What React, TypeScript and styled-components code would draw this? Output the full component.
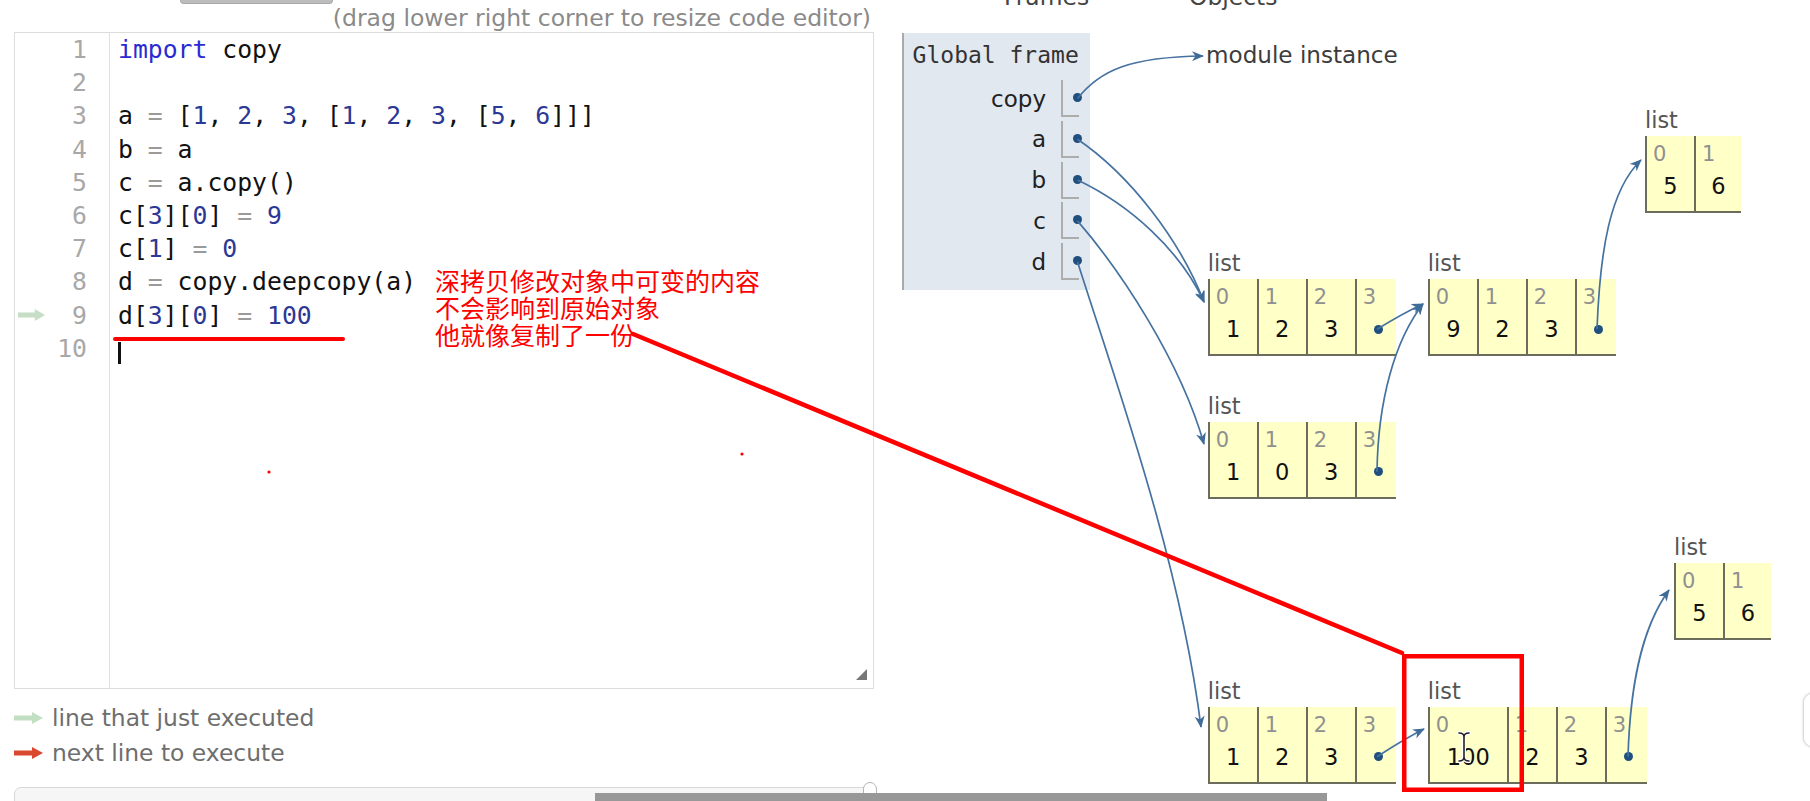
import React from 'react';
import styled, { createGlobalStyle } from 'styled-components';

const SANS = '"DejaVu Sans", Verdana, sans-serif';
const MONO = '"DejaVu Sans Mono", monospace';
const CJK = '"Noto Sans CJK SC", "DejaVu Sans", sans-serif';

const GlobalStyle = createGlobalStyle`
  html, body { margin: 0; padding: 0; background: #fff; overflow: hidden; }
  body { font-family: ${SANS}; }
  #root { width: 1810px; height: 801px; }
`;

const Page = styled.div`
  position: relative;
  width: 1810px;
  height: 801px;
  overflow: hidden;
  display: flex;
  background: #fff;
`;

/* ---------------- left column: editor ---------------- */

const LeftCol = styled.div`
  width: 880px;
  flex: none;
  box-sizing: border-box;
  padding-left: 14px;
  display: flex;
  flex-direction: column;
  & > * { flex: none; }
`;

const TopStrip = styled.div`
  width: 860px;
  height: 32px;
  display: flex;
  justify-content: space-between;
  align-items: flex-start;
`;

const ButtonStub = styled.div`
  margin-left: 166px;
  width: 190px;
  height: 3px;
  background: #bdbdbd;
  border: 1px solid #a9a9a9;
  border-top: none;
  border-radius: 0 0 10px 10px;
`;

const Hint = styled.div`
  margin-top: 4px;
  margin-right: 3px;
  font-size: 23.5px;
  line-height: 28px;
  color: #8a8a8a;
  white-space: nowrap;
`;

const Editor = styled.div`
  position: relative;
  width: 860px;
  height: 657px;
  box-sizing: border-box;
  border: 1px solid #dcdcdc;
  display: flex;
  background: #fff;
`;

const Gutter = styled.div`
  width: 95px;
  flex: none;
  box-sizing: border-box;
  border-right: 1px solid #e0e0e0;
  font-family: ${MONO};
  font-size: 24.75px;
  color: #a8a8a8;
`;

const GutterRow = styled.div`
  height: 33.2px;
  box-sizing: border-box;
  padding: 0 22px 0 3px;
  display: flex;
  align-items: center;
  justify-content: space-between;
`;

const LineNo = styled.span`
  margin-left: auto;
`;

const CodeArea = styled.div`
  flex: 1;
  padding-left: 8px;
  font-family: ${MONO};
  font-size: 24.75px;
  color: #111;
`;

const CodeLine = styled.div`
  width: fit-content;
  height: 33.2px;
  line-height: 33.2px;
  white-space: pre;
  display: flex;
  align-items: center;
`;

type TokKind = 'kw' | 'num' | 'op' | 'plain';

const Tok = styled.span<{ $kind: TokKind }>`
  color: ${(p) =>
    p.$kind === 'kw' ? '#2a2ad4' : p.$kind === 'num' ? '#2b3896' : p.$kind === 'op' ? '#9a9a9a' : '#111'};
`;

const Caret = styled.span`
  display: inline-block;
  width: 3px;
  height: 22px;
  margin-top: 10px;
  background: #111;
`;

const ResizeCorner = styled.div`
  position: absolute;
  right: 6px;
  bottom: 8px;
  width: 0;
  height: 0;
  border-left: 11px solid transparent;
  border-bottom: 11px solid #777;
`;

const Legend = styled.div`
  margin-top: 11px;
  display: flex;
  flex-direction: column;
`;

const LegendRow = styled.div`
  height: 35px;
  display: flex;
  align-items: center;
  gap: 9px;
  font-size: 23.4px;
  color: #6e6e6e;
`;

const Slider = styled.div`
  position: relative;
  margin-top: 16.5px;
  width: 860px;
  height: 26px;
  box-sizing: border-box;
  border: 1px solid #d8d8d8;
  border-radius: 7px 7px 0 0;
  background: #f6f6f6;
`;

const SliderKnob = styled.div`
  position: absolute;
  right: -4px;
  top: -6px;
  width: 14px;
  height: 32px;
  box-sizing: border-box;
  border: 1.5px solid #b5b5b5;
  border-radius: 7px 7px 0 0;
  background: #fff;
`;

/* ---------------- right column: visualization canvas ---------------- */

const Canvas = styled.div`
  position: relative;
  flex: 1;
  height: 801px;
`;

const Heading = styled.div<{ $x: number }>`
  position: absolute;
  left: ${(p) => p.$x}px;
  top: -17px;
  font-size: 23.4px;
  line-height: 28px;
  color: #444;
`;

const FrameBox = styled.div`
  position: absolute;
  left: 22px;
  top: 33px;
  width: 188px;
  height: 257px;
  box-sizing: border-box;
  background: #e1e8f0;
  border-left: 2px solid #a9a9a9;
  display: flex;
  flex-direction: column;
`;

const FrameTitle = styled.div`
  padding: 8px 0 0 8.6px;
  font-family: ${MONO};
  font-size: 23px;
  line-height: 28px;
  color: #333;
`;

const FrameRows = styled.div`
  margin-top: 11px;
  display: flex;
  flex-direction: column;
  gap: 3.8px;
`;

const VarRow = styled.div`
  height: 37px;
  padding-right: 11px;
  display: flex;
  justify-content: flex-end;
  align-items: center;
`;

const VarName = styled.span`
  margin-right: 15px;
  font-size: 23px;
  line-height: 28px;
  color: #222;
`;

const VarBox = styled.div`
  width: 18px;
  height: 37px;
  box-sizing: border-box;
  border-left: 2px solid #adadad;
  border-bottom: 2px solid #adadad;
  padding-left: 10px;
  display: flex;
  align-items: center;
`;

const Dot = styled.span`
  flex: none;
  display: block;
  width: 9px;
  height: 9px;
  border-radius: 50%;
  background: #1f4f7f;
`;

const ModuleLabel = styled.div`
  position: absolute;
  left: 326px;
  top: 41px;
  font-size: 23.1px;
  line-height: 28px;
  color: #3c3c3c;
`;

const ListWrap = styled.div<{ $x: number; $y: number }>`
  position: absolute;
  left: ${(p) => p.$x}px;
  top: ${(p) => p.$y - 29}px;
  display: flex;
  flex-direction: column;
`;

const ListLabel = styled.div`
  margin-bottom: 3px;
  font-size: 22.4px;
  line-height: 26px;
  color: #555;
`;

const CellRow = styled.div`
  display: flex;
`;

const CellBox = styled.div<{ $w: number }>`
  width: ${(p) => p.$w}px;
  height: 77px;
  box-sizing: border-box;
  background: #ffffc8;
  border-left: 2px solid #6c6c5c;
  border-bottom: 2px solid #6c6c5c;
  display: flex;
  flex-direction: column;
`;

const CellIdx = styled.div`
  height: 30px;
  box-sizing: border-box;
  padding: 6px 0 0 6px;
  font-size: 21px;
  line-height: 24px;
  color: #909090;
`;

const CellVal = styled.div<{ $ptr?: boolean }>`
  margin-top: 6px;
  height: 28px;
  padding-left: ${(p) => (p.$ptr ? 4 : 0)}px;
  display: flex;
  align-items: center;
  justify-content: center;
  font-size: 22.5px;
  line-height: 28px;
  color: #111;
`;

const ArrowLayer = styled.svg`
  position: absolute;
  left: 0;
  top: 0;
  width: 930px;
  height: 801px;
  overflow: visible;
  pointer-events: none;
  z-index: 2;
`;

/* ---------------- overlays ---------------- */

const AnnotationLayer = styled.svg`
  position: absolute;
  left: 0;
  top: 0;
  width: 1810px;
  height: 801px;
  pointer-events: none;
  z-index: 5;
`;

const NoteText = styled.div`
  position: absolute;
  left: 435px;
  top: 266.5px;
  font-family: ${CJK};
  font-size: 25px;
  line-height: 27px;
  color: #ff0000;
  white-space: nowrap;
  z-index: 5;
`;

const ScrollThumb = styled.div`
  position: absolute;
  left: 595px;
  top: 793px;
  width: 732px;
  height: 8px;
  background: #989898;
  z-index: 6;
`;

const EdgeWidget = styled.div`
  position: absolute;
  left: 1803px;
  top: 693px;
  width: 24px;
  height: 54px;
  box-sizing: border-box;
  border: 1px solid #dadada;
  border-radius: 9px;
  background: #fff;
  box-shadow: 0 0 3px rgba(0, 0, 0, 0.15);
  z-index: 6;
`;

/* ---------------- data ---------------- */

const CODE = [
  'import copy',
  '',
  'a = [1, 2, 3, [1, 2, 3, [5, 6]]]',
  'b = a',
  'c = a.copy()',
  'c[3][0] = 9',
  'c[1] = 0',
  'd = copy.deepcopy(a)',
  'd[3][0] = 100',
  '',
];

function tokenize(line: string): { t: string; k: TokKind }[] {
  return line
    .split(/(\bimport\b|\d+|=)/)
    .filter((s) => s.length > 0)
    .map((t) => ({
      t,
      k: t === 'import' ? 'kw' : /^\d+$/.test(t) ? 'num' : t === '=' ? 'op' : 'plain',
    }));
}

type Cell = { v?: string; ptr?: boolean; w: number };
type ListDef = { x: number; y: number; cells: Cell[] };

const W4 = [49, 49, 49, 41];
const mk = (vals: (string | null)[], widths: number[]): Cell[] =>
  vals.map((v, i) => (v === null ? { ptr: true, w: widths[i] } : { v, w: widths[i] }));

const LISTS: ListDef[] = [
  { x: 327.7, y: 279.3, cells: mk(['1', '2', '3', null], W4) },
  { x: 547.8, y: 279.3, cells: mk(['9', '2', '3', null], W4) },
  { x: 765, y: 136, cells: mk(['5', '6'], [49, 47]) },
  { x: 327.7, y: 421.7, cells: mk(['1', '0', '3', null], W4) },
  { x: 327.7, y: 706.7, cells: mk(['1', '2', '3', null], W4) },
  { x: 547.8, y: 706.7, cells: mk(['100', '2', '3', null], [79, 49, 49, 42]) },
  { x: 794, y: 563.3, cells: mk(['5', '6'], [49, 48]) },
];

const VARS = ['copy', 'a', 'b', 'c', 'd'];

const ARROWS = [
  'M1077.5,98.5 C1100,70 1130,57 1203,56',
  'M1077.5,139.3 C1130,175 1180,240 1204,302',
  'M1077.5,180.1 C1130,205 1180,250 1204,302',
  'M1077.5,220.9 C1120,270 1180,360 1204,444',
  'M1077.5,261.7 C1115,380 1180,560 1201,727',
  'M1377,329.3 C1392,320 1408,311 1423,304',
  'M1377,471.7 C1378,400 1395,340 1423,304',
  'M1597,329.3 C1600,250 1610,190 1641,160',
  'M1377,756.7 C1392,747 1408,737 1424,729',
  'M1628,756.7 C1630,690 1640,630 1669,590',
];

/* ---------------- pieces ---------------- */

const StepArrow = ({ color, w = 29 }: { color: string; w?: number }) => (
  <svg width={w} height="14" viewBox="0 0 29 14" preserveAspectRatio="none">
    <path d="M0 4.5 H18 V1 L29 7 L18 13 V9.5 H0 Z" fill={color} />
  </svg>
);

const ListObj = ({ def }: { def: ListDef }) => (
  <ListWrap $x={def.x} $y={def.y}>
    <ListLabel>list</ListLabel>
    <CellRow>
      {def.cells.map((c, i) => (
        <CellBox key={i} $w={c.w}>
          <CellIdx>{i}</CellIdx>
          <CellVal $ptr={c.ptr}>{c.ptr ? <Dot /> : c.v}</CellVal>
        </CellBox>
      ))}
    </CellRow>
  </ListWrap>
);

export default function App() {
  return (
    <>
      <GlobalStyle />
      <Page>
        <LeftCol>
          <TopStrip>
            <ButtonStub />
            <Hint>(drag lower right corner to resize code editor)</Hint>
          </TopStrip>
          <Editor>
            <Gutter>
              {CODE.map((_, i) => (
                <GutterRow key={i}>
                  {i === 8 && <StepArrow color="#c6dec6" w={27} />}
                  <LineNo>{i + 1}</LineNo>
                </GutterRow>
              ))}
            </Gutter>
            <CodeArea>
              {CODE.map((line, i) => (
                <CodeLine key={i}>
                  {tokenize(line).map((tk, j) => (
                    <Tok key={j} $kind={tk.k}>
                      {tk.t}
                    </Tok>
                  ))}
                  {i === 9 && <Caret />}
                </CodeLine>
              ))}
            </CodeArea>
            <ResizeCorner />
          </Editor>
          <Legend>
            <LegendRow>
              <StepArrow color="#c3dfc3" />
              <span>line that just executed</span>
            </LegendRow>
            <LegendRow>
              <StepArrow color="#d9482f" />
              <span>next line to execute</span>
            </LegendRow>
          </Legend>
          <Slider>
            <SliderKnob />
          </Slider>
        </LeftCol>

        <Canvas>
          <Heading $x={124}>Frames</Heading>
          <Heading $x={309}>Objects</Heading>
          <FrameBox>
            <FrameTitle>Global frame</FrameTitle>
            <FrameRows>
              {VARS.map((v) => (
                <VarRow key={v}>
                  <VarName>{v}</VarName>
                  <VarBox>
                    <Dot />
                  </VarBox>
                </VarRow>
              ))}
            </FrameRows>
          </FrameBox>
          <ModuleLabel>module instance</ModuleLabel>
          {LISTS.map((l, i) => (
            <ListObj key={i} def={l} />
          ))}
          <ArrowLayer viewBox="0 0 930 801">
            <defs>
              <marker
                id="ah"
                viewBox="0 0 12 10"
                refX="11"
                refY="5"
                markerWidth="13"
                markerHeight="10"
                markerUnits="userSpaceOnUse"
                orient="auto"
              >
                <path d="M0,0 L12,5 L0,10 L3.5,5 z" fill="#3f6c98" />
              </marker>
            </defs>
            <g transform="translate(-880 0)">
              {ARROWS.map((d, i) => (
                <path key={i} d={d} fill="none" stroke="#4672a0" strokeWidth="1.7" markerEnd="url(#ah)" />
              ))}
            </g>
          </ArrowLayer>
        </Canvas>

        <NoteText>
          深拷贝修改对象中可变的内容
          <br />
          不会影响到原始对象
          <br />
          他就像复制了一份
        </NoteText>
        <AnnotationLayer viewBox="0 0 1810 801">
          <line x1="115" y1="339" x2="343" y2="339" stroke="#ff0000" strokeWidth="4" strokeLinecap="round" />
          <line x1="633" y1="334" x2="1402" y2="653" stroke="#ff0000" strokeWidth="4.5" strokeLinecap="round" />
          <rect x="1404.25" y="656.25" width="117.5" height="133.5" fill="none" stroke="#ff0000" strokeWidth="4.5" />
          <circle cx="269" cy="472" r="1.6" fill="#ff0000" />
          <circle cx="742" cy="454" r="1.6" fill="#ff0000" />
          <g>
            <path
              d="M1459,733 Q1464,733 1464,737 Q1464,733 1469,733 M1464,737 V757 M1459,761 Q1464,761 1464,757 Q1464,761 1469,761"
              fill="none"
              stroke="#fff"
              strokeWidth="4"
              strokeLinecap="round"
            />
            <path
              d="M1459,733 Q1464,733 1464,737 Q1464,733 1469,733 M1464,737 V757 M1459,761 Q1464,761 1464,757 Q1464,761 1469,761"
              fill="none"
              stroke="#222"
              strokeWidth="1.6"
              strokeLinecap="round"
            />
          </g>
        </AnnotationLayer>
        <ScrollThumb />
        <EdgeWidget />
      </Page>
    </>
  );
}
